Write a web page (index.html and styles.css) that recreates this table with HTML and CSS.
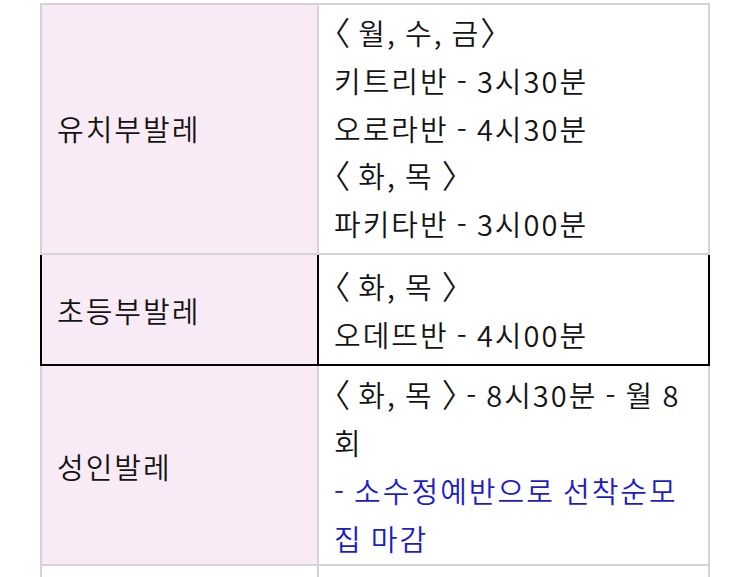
FILE: index.html
```html
<!DOCTYPE html>
<html lang="ko">
<head>
<meta charset="utf-8">
<link rel="stylesheet" href="styles.css">
</head>
<body>
<div class="page">
<table class="schedule">
  <tr class="first">
    <td class="name">유치부발레</td>
    <td class="times"><span class="br">〈</span> 월, 수, 금<span class="br">〉</span><br>키트리반 - 3시30분<br>오로라반 - 4시30분<br><span class="br">〈</span> 화, 목 <span class="br">〉</span><br>파키타반 - 3시00분</td>
  </tr>
  <tr class="mark">
    <td class="name">초등부발레</td>
    <td class="times"><span class="br">〈</span> 화, 목 <span class="br">〉</span><br>오데뜨반 - 4시00분</td>
  </tr>
  <tr class="third">
    <td class="name">성인발레</td>
    <td class="times"><span class="br">〈</span> 화, 목 <span class="br">〉</span> - 8시30분 - 월 8회<br><span class="note">- 소수정예반으로 선착순모집 마감</span></td>
  </tr>
  <tr class="blank">
    <td class="name">&nbsp;</td>
    <td class="times">&nbsp;</td>
  </tr>
</table>
</div>
</body>
</html>
```
FILE: styles.css
```css
html, body {
  margin: 0;
  padding: 0;
  background: #ffffff;
}
.page {
  padding: 3px 40px 0 40px;
}
.schedule {
  width: 670px;
  border-collapse: collapse;
  border: 2px solid #d4d4d8;
  font-family: "Noto Sans CJK KR", "Noto Sans", sans-serif;
  font-weight: 350;
  font-size: 29px;
  letter-spacing: 2px;
  word-spacing: -2px;
  line-height: 47.75px;
  color: #141414;
}
.schedule td {
  border: 2px solid #d4d4d8;
  padding: 4px 15px 5px 15px;
  vertical-align: middle;
}
.schedule .name {
  width: 245px;
  background: #f9ebf5;
}
.schedule .times {
  vertical-align: top;
}
.schedule .mark td {
  border: 2px solid #000000;
  padding-top: 8px;
  padding-bottom: 6px;
}
.schedule .third td {
  padding-top: 5px;
  padding-bottom: 2px;
}
.schedule .blank .name {
  background: #ffffff;
}
.br {
  font-feature-settings: "halt";
  font-size: 1.12em;
  line-height: 1;
  letter-spacing: 0;
}
.note {
  color: #1c1ccc;
}
```
